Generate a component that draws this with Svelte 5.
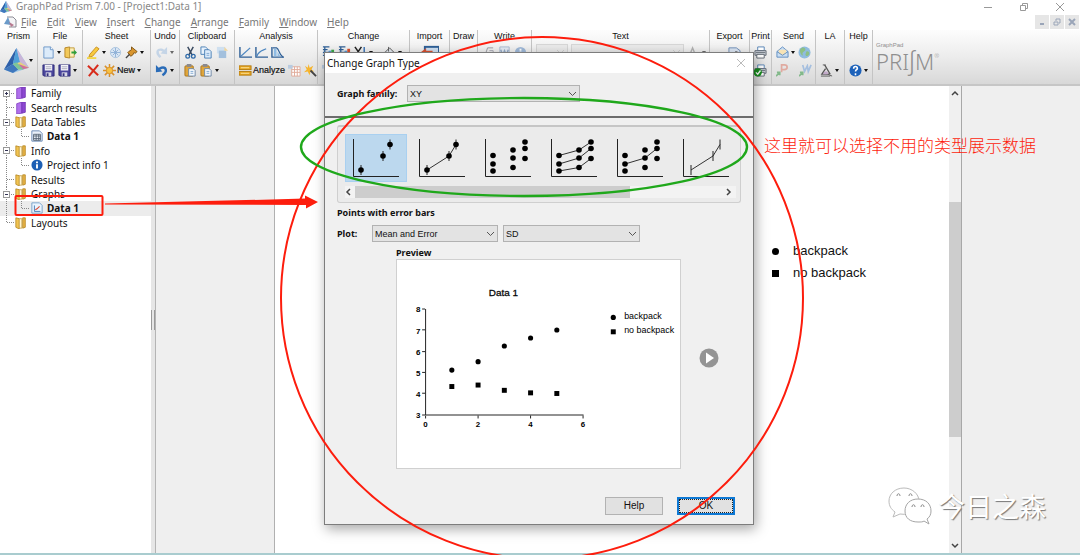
<script lang="ts">
  interface Tool {
    icon?: string;
    label: string;
    text?: string;
    menu?: boolean;
    faded?: boolean;
  }

  interface Group {
    name: string;
    width: number;
    rows: (Tool | null)[][];
  }

  interface TreeRow {
    label: string;
    icon: string;
    toggle?: '+' | '-';
    child?: boolean;
    bold?: boolean;
    selected?: boolean;
  }

  const prism = `
    <path d="M7 0L0 12L5 14L14 11Z" fill="#9cc7e6"/>
    <path d="M7 0L0 12L5 9Z" fill="#2f5fa8"/>
    <path d="M7 0L5 9L9 8Z" fill="#4f9fd8"/>
    <path d="M7 0L9 8L14 11Z" fill="#c9b5d8"/>
    <path d="M5 9L9 8L14 11L8 12Z" fill="#e8d27a"/>
    <path d="M8 9L14 11L10 12Z" fill="#d0709c"/>
    <path d="M0 12L5 9L8 12L5 14Z" fill="#3f77bd"/>
    <path d="M5 9L8 12L11 12L7 8Z" fill="#7cc59a"/>`;

  const copySheets = `
    <path d="M1 1H6L8 3V9H1Z" fill="#e8f2fc" stroke="#4a7fb5"/>
    <path d="M5 4H10L12 6V13H5Z" fill="#dcebfa" stroke="#4a7fb5"/>
    <path d="M7 8H10M7 10H10" stroke="#7ea8d0"/>`;

  const clipboard = `
    <rect x="1" y="2" width="9" height="11" rx="1" fill="#e0a63c" stroke="#a8741c"/>
    <rect x="3" y="0" width="5" height="3" fill="#8a8a90"/>
    <path d="M5 5H10L12 7V13H5Z" fill="#f4f8fc" stroke="#6d87a5"/>
    <path d="M7 8H10M7 10H10" stroke="#7ea8d0"/>`;

  const floppy = `
    <path d="M1 1H13V13H2L1 12Z" fill="#4a459c" stroke="#2f2b78"/>
    <rect x="3" y="1" width="8" height="6" fill="#f3f3f8"/>
    <path d="M4 3H10M4 5H10" stroke="#aab"/>
    <rect x="4" y="9" width="6" height="4" fill="#d8d8e6"/>
    <rect x="5" y="10" width="2" height="3" fill="#33307c"/>`;

  const barsChange = `
    <path d="M1 1H8M1 4H6M1 7H8M1 10H6M3 1V13" stroke="#2e5f96" stroke-width="1.4" fill="none"/>`;

  const printer = `
    <path d="M4 1H11V5H4Z" fill="#fff" stroke="#5583b5"/>
    <path d="M1 5H13V10H1Z" fill="#c9ced6" stroke="#606873"/>
    <path d="M3 9H11V13H3Z" fill="#fff" stroke="#606873"/>
    <path d="M2 7H12" stroke="#707882"/>`;

  const icons: Record<string, string> = {
    prism,
    page: `<path d="M2 1H9L12 4V13H2Z" fill="#dcebfa" stroke="#6b96c8"/><path d="M9 1V4H12" fill="#fff" stroke="#6b96c8"/>`,
    open: `<path d="M1 2L6 1V13L1 12Z" fill="#f3c95a" stroke="#b58424"/><path d="M6 2H11V12H6Z" fill="#fdf0b8" stroke="#c39a3a"/><path d="M8 6H11V4L14 7L11 10V8H8Z" fill="#2e9e3c"/>`,
    floppy,
    pencil: `<path d="M3 9L10 1L13 3L6 11L2 12Z" fill="#f7c93e" stroke="#c88f1e"/><path d="M0 13H10" stroke="#f2d648" stroke-width="2"/>`,
    snow: `<circle cx="7" cy="7" r="5.5" fill="#dbe7f4" stroke="#a9c2de"/><path d="M7 2V12M2 7H12M4 4L10 10M10 4L4 10" stroke="#8fb0d6"/>`,
    pin: `<path d="M7 1L13 6L11 8L10 7L8 10L6 11L3 7L4 6L7 4Z" fill="#d9952e" stroke="#7c5212"/><path d="M5 9L1 13" stroke="#444" stroke-width="1.5"/>`,
    cross: `<path d="M1 2L12 12M12 1L2 13" stroke="#d82c1c" stroke-width="2.2" fill="none"/>`,
    spark: `<path d="M7 0V14M0 7H14M2 2L12 12M12 2L2 12" stroke="#d9912a" stroke-width="1.6"/><circle cx="7" cy="7" r="3.4" fill="#f7c243" stroke="#d9912a"/>`,
    redo: `<path d="M6 12C1 8 2 3 7 4L11 6" fill="none" stroke="#a9c4e2" stroke-width="2.6"/><path d="M13 1V9L6 8Z" fill="#a9c4e2"/>`,
    undo: `<path d="M8 12C14 8 12 3 7 4L3 6" fill="none" stroke="#2a6cb8" stroke-width="2.6"/><path d="M1 1V9L8 8Z" fill="#2a6cb8"/>`,
    cut: `<path d="M4 1L9 10M10 1L5 10" stroke="#3a4a60" stroke-width="1.6"/><circle cx="4" cy="11" r="2" fill="none" stroke="#2f6aa8" stroke-width="1.4"/><circle cx="10" cy="11" r="2" fill="none" stroke="#2f6aa8" stroke-width="1.4"/>`,
    copy: copySheets,
    duplicate: `<rect x="1" y="1" width="9" height="7" fill="#cfe0f0"/><rect x="3" y="5" width="8" height="8" fill="#a3c0dd"/><path d="M9 1L13 5H9Z" fill="#f1d49a"/>`,
    paste: clipboard,
    line: `<path d="M1 1V12H14" fill="none" stroke="#2e5f96" stroke-width="1.5"/><path d="M2 11L12 2" stroke="#4c86c0" stroke-width="1.3"/>`,
    curve: `<path d="M1 1V12H14" fill="none" stroke="#2e5f96" stroke-width="1.5"/><path d="M2 11C4 5 8 5 12 3" fill="none" stroke="#4c86c0" stroke-width="1.3"/>`,
    area: `<path d="M1 1V12H14" fill="none" stroke="#2e5f96" stroke-width="1.5"/><path d="M2 2H6C9 3 8 9 13 12" fill="none" stroke="#2e5f96" stroke-width="1.3"/><path d="M3 3H6V11H3ZM7 6L10 11H7Z" fill="#8fbce4"/>`,
    analyze: `<rect x="0" y="2" width="13" height="4" fill="#e9a820" stroke="#b57b10"/><rect x="0" y="8" width="13" height="4" fill="#e9a820" stroke="#b57b10"/><path d="M2 4H11M2 10H11" stroke="#fbe3a0"/>`,
    grid: `<path d="M4 3H13V13H4ZM4 6H13M4 9H13M7 3V13M10 3V13" fill="#fff" stroke="#e0aa98"/><path d="M0 1H5V5H0Z" fill="#b9cbe0"/>`,
    wand: `<path d="M5 0L6 4L10 2L8 6L11 8L7 8L6 12L4 8L0 9L3 6L1 2L4 4Z" fill="#f6b52e"/><path d="M7 7L13 13" stroke="#444" stroke-width="2"/>`,
    changeA: `${barsChange}<rect x="7" y="5" width="3" height="8" fill="#5a97cf"/><rect x="10" y="4" width="3" height="9" fill="#3aa648"/>`,
    changeB: `${barsChange}<rect x="7" y="5" width="3" height="8" fill="#5a97cf"/><rect x="10" y="3" width="3" height="10" fill="#d8502e"/>`,
    axisX: `<path d="M1 1L8 11M8 1L1 11" stroke="#222" stroke-width="1.6"/><path d="M11 1V13" stroke="#3d76b8" stroke-width="1.6"/>`,
    bucket: `<path d="M2 7L7 2L12 7L7 12Z" fill="#e8edf3" stroke="#555"/><path d="M6 1V6" stroke="#555"/><path d="M11 7L13 12" stroke="#555" stroke-width="2"/>`,
    importGraph: `<rect x="3" y="3" width="11" height="10" fill="#cfe0f2" stroke="#2e5f96" stroke-width="1.5"/><path d="M0 7L4 4V6H9V10H4V12Z" fill="#d8502e"/>`,
    root: `<path d="M1 7L3 11L6 2H12" fill="none" stroke="#9a9aa2"/><path d="M8 5H12V11H8V8H12" fill="none" stroke="#a5a5b0"/>`,
    word: `<path d="M2 1H12V13H2Z" fill="#e4ebf4" stroke="#a9bad0"/><path d="M3 4L5 10L7 5L9 10L11 4" fill="none" stroke="#93a9c6" stroke-width="1.5"/>`,
    infoFaded: `<circle cx="7" cy="7" r="6" fill="#9fb9d9"/><path d="M7 6V11M7 3V5" stroke="#fff" stroke-width="2"/>`,
    fontA: `<path d="M2 12L6 2L10 12M4 8H9" fill="none" stroke="#888" stroke-width="1.5"/>`,
    exportSheet: `<path d="M1 2H9L13 5V13H1Z" fill="#dce6f4" stroke="#6d8db8"/><path d="M8 6L14 8" stroke="#333"/>`,
    printer,
    printOk: `${printer}<circle cx="4" cy="9" r="4.5" fill="#18911e"/><path d="M2 9L4 11L7 7" fill="none" stroke="#fff" stroke-width="1.4"/>`,
    mail: `<path d="M1 6L7 1L13 6V12H1Z" fill="#c9def4" stroke="#5f8cc0"/><path d="M3 4H11V8L7 10L3 8Z" fill="#f7e3b6"/><path d="M1 6L7 10L13 6" fill="none" stroke="#5f8cc0"/>`,
    globe: `<circle cx="7" cy="7" r="6.5" fill="#8fbce0"/><path d="M2 4C5 0 8 2 8 4S4 6 5 9S2 9 2 4ZM9 6C11 5 13 7 12 9S8 12 8 9Z" fill="#8cbf86"/>`,
    sendP: `<path d="M6 9V1H9C13 1 13 6 9 6H6" fill="none" stroke="#e0aaa0" stroke-width="1.8"/><path d="M0 13L4 9M1 9H4V12" fill="none" stroke="#82b98a" stroke-width="1.8"/>`,
    sendW: `<path d="M4 1L6 8L9 2L10 8L13 1" fill="none" stroke="#a5bfdf" stroke-width="1.8"/><path d="M0 13L4 9M1 9H4V12" fill="none" stroke="#82b98a" stroke-width="1.8"/>`,
    flask: `<path d="M5 1L11 11M6 5L2 11H10" fill="none" stroke="#555" stroke-width="1.4"/><path d="M3 1H6M6 10L13 13M1 13H11" fill="none" stroke="#555"/><path d="M5 8H8L9 11H3Z" fill="#c2a9c9"/>`,
    help: `<circle cx="7" cy="7" r="6.5" fill="#1d62ba"/><path d="M5 5C5 2 9 2 9 5C9 6 7 6 7 8M7 10V12" fill="none" stroke="#fff" stroke-width="1.7"/>`,
    folderPurple: `<path d="M2 2L8 0V13L2 14Z" fill="#b070ec" stroke="#8745c4"/><path d="M8 0H12V12L8 13Z" fill="#8d48d2" stroke="#7436b4"/>`,
    folder: `<path d="M1 1L5 2V14L1 12Z" fill="#f2c452" stroke="#b98a28"/><path d="M5 2H8V13H5Z" fill="#fff6d8" stroke="#c8a34a"/><path d="M9 1H12V12L9 13Z" fill="#e8b444" stroke="#b98a28"/>`,
    table: `<path d="M1 1H10L13 4V13H1Z" fill="#eaf1fa" stroke="#5d7fae"/><path d="M3 5H11V12H3ZM3 7H11M3 10H11M6 5V12M9 5V12" fill="none" stroke="#52606f"/>`,
    info: `<circle cx="7" cy="7" r="6.5" fill="#1d5fb4"/><path d="M7 6V11M7 3V5" stroke="#fff" stroke-width="2.2"/>`,
    graph: `<path d="M1 1H10L13 4V13H1Z" fill="#eaf4fd" stroke="#6d9ac4"/><path d="M4 4V11H11" fill="none" stroke="#3f74ad"/><path d="M5 9L7 8L10 5" fill="none" stroke="#d84a36" stroke-width="1.3"/>`
  };

  const menus = ['File', 'Edit', 'View', 'Insert', 'Change', 'Arrange', 'Family', 'Window', 'Help'];

  const groups: Group[] = [
    {
      name: 'File',
      width: 45,
      rows: [
        [{ icon: 'page', label: 'New file', menu: true }, { icon: 'open', label: 'Open' }],
        [{ icon: 'floppy', label: 'Save' }, { icon: 'floppy', label: 'Save as', menu: true }]
      ]
    },
    {
      name: 'Sheet',
      width: 68,
      rows: [
        [
          { icon: 'pencil', label: 'Highlight', menu: true },
          { icon: 'snow', label: 'Freeze' },
          { icon: 'pin', label: 'Pin note', menu: true }
        ],
        [
          { icon: 'cross', label: 'Delete sheet' },
          { icon: 'spark', label: 'New sheet', text: 'New', menu: true }
        ]
      ]
    },
    {
      name: 'Undo',
      width: 29,
      rows: [
        [{ icon: 'redo', label: 'Redo', menu: true, faded: true }],
        [{ icon: 'undo', label: 'Undo', menu: true }]
      ]
    },
    {
      name: 'Clipboard',
      width: 55,
      rows: [
        [
          { icon: 'cut', label: 'Cut' },
          { icon: 'copy', label: 'Copy' },
          { icon: 'duplicate', label: 'Duplicate' }
        ],
        [{ icon: 'paste', label: 'Paste' }, { icon: 'paste', label: 'Paste special', menu: true }]
      ]
    },
    {
      name: 'Analysis',
      width: 83,
      rows: [
        [
          { icon: 'line', label: 'Linear regression' },
          { icon: 'curve', label: 'Nonlinear regression' },
          { icon: 'area', label: 'Interpolate' }
        ],
        [
          { icon: 'analyze', label: 'Analyze data', text: 'Analyze' },
          { icon: 'grid', label: 'Change parameters' },
          { icon: 'wand', label: 'Analysis wizard' }
        ]
      ]
    },
    {
      name: 'Change',
      width: 92,
      rows: [
        [
          { icon: 'changeA', label: 'Graph type' },
          { icon: 'changeB', label: 'Graph order' },
          { icon: 'axisX', label: 'Format axes', menu: true },
          null,
          { icon: 'bucket', label: 'Color scheme', menu: true }
        ],
        [{ icon: 'grid', label: 'Format graph' }]
      ]
    },
    { name: 'Import', width: 40, rows: [[null, { icon: 'importGraph', label: 'Import' }]] },
    { name: 'Draw', width: 28, rows: [] },
    {
      name: 'Write',
      width: 54,
      rows: [
        [
          { icon: 'root', label: 'Equation' },
          { icon: 'word', label: 'Word object' },
          { icon: 'infoFaded', label: 'Info' }
        ]
      ]
    },
    { name: 'Text', width: 178, rows: [] },
    { name: 'Export', width: 40, rows: [[null, null, { icon: 'exportSheet', label: 'Export' }]] },
    {
      name: 'Print',
      width: 22,
      rows: [[{ icon: 'printer', label: 'Print' }], [{ icon: 'printOk', label: 'Print now' }]]
    },
    {
      name: 'Send',
      width: 44,
      rows: [
        [{ icon: 'mail', label: 'Send mail', menu: true }, { icon: 'globe', label: 'Publish' }],
        [{ icon: 'sendP', label: 'Send to PowerPoint' }, null, { icon: 'sendW', label: 'Send to Word' }]
      ]
    },
    { name: 'LA', width: 29, rows: [[], [{ icon: 'flask', label: 'LabArchives', menu: true }]] },
    { name: 'Help', width: 28, rows: [[], [{ icon: 'help', label: 'Help topics', menu: true }]] }
  ];

  const tree: TreeRow[] = [
    { label: 'Family', icon: 'folderPurple', toggle: '+' },
    { label: 'Search results', icon: 'folderPurple' },
    { label: 'Data Tables', icon: 'folder', toggle: '-' },
    { label: 'Data 1', icon: 'table', child: true, bold: true },
    { label: 'Info', icon: 'folder', toggle: '-' },
    { label: 'Project info 1', icon: 'info', child: true },
    { label: 'Results', icon: 'folder' },
    { label: 'Graphs', icon: 'folder', toggle: '-' },
    { label: 'Data 1', icon: 'graph', child: true, bold: true, selected: true },
    { label: 'Layouts', icon: 'folder' }
  ];

  // thumbnails of the graph types, drawn in a 62x47 box
  const three = [[16, 21.5], [16, 30], [16, 37], [36, 16], [36, 24], [36, 33.5], [48, 8], [48, 14.5], [48, 24.5]];
  const means = [[16, 36], [38, 22], [45, 10.5]];

  const types = [
    { name: 'Points with error bars', dots: means, bars: means, lines: [] as string[] },
    { name: 'Points and connecting line', dots: means, bars: means, lines: ['16,36 38,22 45,10.5'] },
    { name: 'Replicates', dots: three, bars: [], lines: [] },
    {
      name: 'Replicates, each connected',
      dots: three,
      bars: [],
      lines: ['16,21.5 36,16 48,8', '16,30 36,24 48,14.5', '16,37 36,33.5 48,24.5']
    },
    { name: 'Replicates, means connected', dots: three, bars: [], lines: ['16,30 36,24 48,14.5'] },
    { name: 'Connecting line with error bars', dots: [], bars: means, lines: ['16,36 38,22 45,10.5'] }
  ];

  const backpack = [5.13, 5.53, 6.27, 6.65, 7.03];
  const noBackpack = [4.35, 4.42, 4.17, 4.05, 4.02];

  const px = (x: number) => 28.5 + x * 26.5;
  const py = (y: number) => 156.5 - (y - 3) * 21.3;

  let selectedType = $state(0);
  let family = $state('XY');
  let plot = $state('Mean and Error');
  let error = $state('SD');
</script>

{#snippet icon(name: string, size = 13)}
  <svg class="icon" width={size} height={size} viewBox="0 0 14 14" aria-hidden="true">
    {@html icons[name]}
  </svg>
{/snippet}

{#snippet chevron()}
  <svg class="chevron" width="9" height="6" viewBox="0 0 9 6" aria-hidden="true">
    <path d="M1 1L4.5 4.5L8 1" fill="none" stroke="#555" />
  </svg>
{/snippet}

<div class="app">
  <header class="titlebar">
    {@render icon('prism', 12)}
    <span class="titlebar-text">GraphPad Prism 7.00 - [Project1:Data 1]</span>
    <div class="window-buttons">
      <button aria-label="Minimize">
        <svg width="10" height="10" viewBox="0 0 10 10"><path d="M1 5.5H9" /></svg>
      </button>
      <button aria-label="Restore">
        <svg width="10" height="10" viewBox="0 0 10 10"><path d="M1.5 3.5H6.5V8.5H1.5ZM3.5 3V1.5H8.5V6.5H7" /></svg>
      </button>
      <button aria-label="Close">
        <svg width="10" height="10" viewBox="0 0 10 10"><path d="M1 1L9 9M9 1L1 9" /></svg>
      </button>
    </div>
  </header>

  <nav class="menubar">
    <svg class="doc-icon" width="13" height="12" viewBox="0 0 13 12" aria-hidden="true">
      <path d="M3 1H9L12 4V11H5" fill="#f4f4f6" stroke="#8b8b95" />
      <path d="M4 1L0 8L7 9Z" fill="#6b9bc9" />
      <path d="M5 6L10 9L7 11Z" fill="#b7798f" />
    </svg>
    {#each menus as menu}
      <button class="menu"><u>{menu[0]}</u>{menu.slice(1)}</button>
    {/each}
    <div class="mdi-buttons">
      <button aria-label="Minimize document">
        <svg width="8" height="8" viewBox="0 0 8 8"><path d="M2 6H6" stroke-width="2" /></svg>
      </button>
      <button aria-label="Restore document">
        <svg width="8" height="8" viewBox="0 0 8 8"><path d="M1 4H5V7H1ZM3 3V1H7V5H6" /></svg>
      </button>
      <button aria-label="Close document">
        <svg width="8" height="8" viewBox="0 0 8 8"><path d="M1 1L7 7M7 1L1 7" stroke-width="2" /></svg>
      </button>
    </div>
  </nav>

  <div class="toolbar">
    <section class="group prism">
      <span class="group-name">Prism</span>
      <button class="tool" aria-label="Prism menu">
        {@render icon('prism', 25)}
        <span class="arrow"></span>
      </button>
    </section>
    {#each groups as group}
      <section class="group" style="width: {group.width}px">
        <span class="group-name">{group.name}</span>
        {#if group.name === 'Text'}
          <div class="tool-row">
            <div class="select font-size">
              <select aria-label="Font size" disabled><option></option></select>
              {@render chevron()}
            </div>
            <div class="select font-name">
              <select aria-label="Font" disabled><option></option></select>
              {@render chevron()}
            </div>
            <button class="tool faded" aria-label="Font style">
              {@render icon('fontA')}
              <span class="arrow"></span>
            </button>
          </div>
        {/if}
        {#each group.rows as row}
          <div class="tool-row">
            {#each row as tool}
              {#if tool}
                <button class="tool" class:faded={tool.faded} aria-label={tool.label}>
                  {@render icon(tool.icon ?? '', group.name === 'Import' ? 18 : 13)}
                  {#if tool.text}<span class="tool-text">{tool.text}</span>{/if}
                  {#if tool.menu}<span class="arrow"></span>{/if}
                </button>
              {:else}
                <span class="spacer"></span>
              {/if}
            {/each}
          </div>
        {/each}
      </section>
    {/each}
    <div class="brand" aria-label="GraphPad PRISM">
      <span class="brand-small">GraphPad</span>
      <span class="brand-name">PRI<span class="brand-s">ʃ</span>M<sup>®</sup></span>
    </div>
  </div>

  <div class="workspace">
    <aside class="sidebar">
      <ul class="tree">
        {#each tree as row, i}
          <li class="tree-row" class:bold={row.bold} class:selected={row.selected}>
            <svg class="branch" width={row.child ? 31 : 15} height="15" aria-hidden="true">
              <path
                class="dots"
                d="M6.5 {i === 0 ? 7 : 0}V{i === tree.length - 1 ? 7 : 15}{row.child ? 'M21.5 0V7.5H30' : 'M7 7.5H15'}"
              />
              {#if row.toggle}
                <rect x="3.5" y="4.5" width="6" height="6" fill="#fff" stroke="#999" />
                <path d="M5 7.5H8{row.toggle === '+' ? 'M6.5 6V9' : ''}" stroke="#335" />
              {/if}
            </svg>
            {@render icon(row.icon, 12)}
            <span>{row.label}</span>
          </li>
        {/each}
      </ul>
    </aside>
    <div class="splitter"><span class="grip"></span></div>
    <main class="canvas">
      <div class="sheet">
        <ul class="legend">
          <li><span class="mark round"></span>backpack</li>
          <li><span class="mark"></span>no backpack</li>
        </ul>
      </div>
      <div class="vscroll">
        <svg width="8" height="6" viewBox="0 0 8 6"><path d="M1 5L4 2L7 5" /></svg>
        <span class="vthumb"></span>
        <svg width="8" height="6" viewBox="0 0 8 6"><path d="M1 1L4 4L7 1" /></svg>
      </div>
    </main>
  </div>

  <div class="dialog" role="dialog" aria-labelledby="dialog-title">
    <div class="dialog-title">
      <span id="dialog-title">Change Graph Type</span>
      <button aria-label="Close dialog">
        <svg width="10" height="10" viewBox="0 0 10 10"><path d="M1 1L9 9M9 1L1 9" stroke="#bbb" /></svg>
      </button>
    </div>

    <div class="dialog-body">
      <div class="field family">
        <label for="family">Graph family:</label>
        <div class="select">
          <select id="family" bind:value={family}>
            <option>XY</option>
            <option>Column</option>
            <option>Grouped</option>
          </select>
          {@render chevron()}
        </div>
      </div>

      <hr />

      <div class="gallery">
        <div class="types">
          {#each types as type, i}
            <button
              class="type"
              class:active={selectedType === i}
              aria-label={type.name}
              onclick={() => (selectedType = i)}
            >
              <svg width="60" height="47" viewBox="0 0 60 47" aria-hidden="true">
                <path d="M8.5 5V42.5H54" fill="none" stroke="#222" />
                {#each type.lines as points}
                  <polyline {points} fill="none" stroke="#333" />
                {/each}
                {#each type.bars as [x, y]}
                  <path d="M{x} {y - 5}V{y + 5}" stroke="#222" />
                {/each}
                {#each type.dots as [x, y]}
                  <circle cx={x} cy={y} r="2.8" />
                {/each}
              </svg>
            </button>
          {/each}
        </div>
        <div class="hscroll">
          <svg width="6" height="8" viewBox="0 0 6 8"><path d="M5 1L2 4L5 7" /></svg>
          <span class="htrack"><span class="hthumb"></span></span>
          <svg width="6" height="8" viewBox="0 0 6 8"><path d="M1 1L4 4L1 7" /></svg>
        </div>
      </div>

      <h2>Points with error bars</h2>

      <div class="field plot">
        <label for="plot">Plot:</label>
        <div class="select">
          <select id="plot" bind:value={plot}>
            <option>Mean and Error</option>
            <option>Median and Range</option>
          </select>
          {@render chevron()}
        </div>
        <div class="select wide">
          <select aria-label="Error bars" bind:value={error}>
            <option>SD</option>
            <option>SEM</option>
          </select>
          {@render chevron()}
        </div>
      </div>

      <div class="preview-area">
        <figure>
          <figcaption>Preview</figcaption>
          <svg class="preview" width="285" height="210" viewBox="0 0 285 210">
            <text class="chart-title" x="107" y="36">Data 1</text>
            <path d="M28.5 49.5V156.5H188" fill="none" stroke="#222" />
            {#each [3, 4, 5, 6, 7, 8] as y}
              <path d="M25 {Math.round(py(y)) - 0.5}H28" stroke="#222" />
              <text class="tick" x="21" y={py(y) + 3}>{y}</text>
            {/each}
            {#each [0, 2, 4, 6] as x}
              <path d="M{Math.round(px(x)) - 0.5} 157V160" stroke="#222" />
              <text class="tick" x={px(x)} y="169">{x}</text>
            {/each}
            {#each backpack as y, i}
              <circle cx={px(i + 1)} cy={py(y)} r="2.6" />
            {/each}
            {#each noBackpack as y, i}
              <rect x={px(i + 1) - 2.5} y={py(y) - 2.5} width="5" height="5" />
            {/each}
            <circle cx="218" cy="58" r="2.6" />
            <text class="key" x="229" y="60">backpack</text>
            <rect x="215.5" y="70" width="5" height="5" />
            <text class="key" x="229" y="74">no backpack</text>
          </svg>
        </figure>
        <button class="next" aria-label="Next preview">
          <svg width="20" height="20" viewBox="0 0 20 20">
            <circle cx="10" cy="10" r="9.5" fill="#949494" />
            <path d="M7 4.5L15 10L7 15.5Z" fill="#fff" />
          </svg>
        </button>
      </div>

      <div class="actions">
        <button class="action">Help</button>
        <button class="action default">OK</button>
      </div>
    </div>
  </div>

  <div class="statusline"></div>

  <svg class="markup" width="1080" height="555" viewBox="0 0 1080 555" aria-hidden="true">
    <ellipse cx="542" cy="298" rx="261" ry="261" stroke="#fd1d0d" stroke-width="2" />
    <ellipse cx="524" cy="147" rx="223" ry="49" stroke="#1fa81b" stroke-width="2.4" />
    <rect x="15.5" y="196" width="87" height="19" rx="1" stroke="#fd1d0d" stroke-width="2" />
    <path d="M105 203.6L305 198.6V195.5L318 202L306 208.5V205L105 204.4Z" fill="#fd1d0d" />
  </svg>
  <p class="note">这里就可以选择不用的类型展示数据</p>
  <div class="watermark">
    <svg width="44" height="38" viewBox="0 0 44 38" aria-hidden="true">
      <path
        d="M16 1C7 1 1 7 1 14C1 19 3 22 7 25L5 30L12 27C25 29 31 22 31 14C31 7 24 1 16 1Z"
        fill="#fff"
        stroke="#bbb"
      />
      <path
        d="M30 12C22 12 17 17 17 24S22 35 30 35C33 35 35 35 36 34L41 37L39 32C42 30 43 27 43 24C43 17 38 12 30 12Z"
        fill="#fff"
        stroke="#a5a5a5"
      />
      <path d="M9 9C9 6 12 6 12 9M21 9C21 6 24 6 24 9M24 20C24 17 27 17 27 20M33 20C33 17 36 17 36 20" fill="none" stroke="#888" />
    </svg>
    <span>今日之森</span>
  </div>
</div>

<style>
  :global(body) {
    background: #fff;
  }

  .app {
    position: relative;
    display: flex;
    flex-direction: column;
    min-height: 100vh;
    overflow: hidden;
    font-family: 'Noto Sans', 'Noto Sans CJK SC', sans-serif;
    font-size: 10px;
    color: #111;
  }

  button {
    margin: 0;
    padding: 0;
    border: 0;
    background: none;
    font: inherit;
    color: inherit;
  }

  svg {
    display: block;
    flex: none;
  }

  .titlebar {
    display: flex;
    align-items: center;
    gap: 4px;
    height: 13px;
    color: #888;
    line-height: 13px;
  }

  .window-buttons {
    display: flex;
    gap: 26px;
    margin-left: auto;
    padding-right: 15px;
  }

  .window-buttons path {
    fill: none;
    stroke: #999;
  }

  .menubar {
    display: flex;
    align-items: center;
    gap: 10px;
    height: 17px;
    padding-left: 4px;
    color: #777;
    line-height: 14px;
  }

  .doc-icon {
    margin-right: -6px;
  }

  .mdi-buttons {
    display: flex;
    gap: 1px;
    margin-left: auto;
    padding-right: 1px;
  }

  .mdi-buttons button {
    display: grid;
    place-items: center;
    width: 14px;
    height: 14px;
    background: #e6e6e6;
  }

  .mdi-buttons path {
    fill: none;
    stroke: #9aa5b8;
  }

  .toolbar {
    display: flex;
    height: 56px;
    box-sizing: border-box;
    border-bottom: 2px solid #c6c6c6;
    background: linear-gradient(#fdfdfd, #ececec 50%, #d8d8d8);
    font-family: 'Liberation Sans', Arial, sans-serif;
  }

  .group {
    display: flex;
    flex: none;
    flex-direction: column;
    box-sizing: border-box;
    border-right: 1px solid #c4c4c4;
    overflow: hidden;
  }

  .group.prism {
    width: 38px;
    align-items: center;
  }

  .group-name {
    font-size: 9px;
    line-height: 13px;
    text-align: center;
  }

  .prism .tool {
    gap: 0;
    margin-top: 5px;
  }

  .prism .arrow {
    margin-left: 0;
  }

  .tool-row {
    display: flex;
    align-items: center;
    gap: 3px;
    height: 18px;
    padding-left: 4px;
  }

  .tool {
    display: flex;
    align-items: center;
    gap: 1px;
  }

  .faded {
    opacity: 0.6;
  }

  .tool-text {
    font-size: 9px;
    line-height: 12px;
    -webkit-text-stroke: 0.2px #111;
  }

  .arrow {
    margin-left: 1px;
    border: 2px solid transparent;
    border-top: 3px solid #111;
    border-bottom: 0;
  }

  .spacer {
    width: 4px;
  }

  .brand {
    display: flex;
    flex-direction: column;
    padding: 12px 0 0 3px;
    color: #8f8f8f;
  }

  .brand-small {
    font-size: 6px;
    line-height: 6px;
  }

  .brand-name {
    font-family: 'Liberation Sans Narrow', 'Noto Sans', sans-serif;
    font-size: 22px;
    font-weight: 300;
    line-height: 24px;
  }

  .brand-s {
    font-size: 26px;
  }

  .brand-name sup {
    font-size: 6px;
    line-height: 6px;
    vertical-align: 12px;
  }

  .workspace {
    display: flex;
    flex: 1;
  }

  .sidebar {
    width: 151px;
    flex: none;
    background: #fff;
  }

  .tree {
    display: grid;
    grid-template-rows: repeat(10, 1fr);
    height: 144px;
    margin: 0;
    padding: 0;
    list-style: none;
  }

  .tree-row {
    display: flex;
    align-items: center;
    overflow: hidden;
    line-height: 14px;
  }

  .tree-row span {
    padding-left: 4px;
  }

  .tree-row.bold {
    font-weight: 700;
  }

  .tree-row.selected {
    background: #ececec;
  }

  .dots {
    fill: none;
    stroke: #888;
    stroke-dasharray: 1 1;
  }

  .splitter {
    display: flex;
    align-items: center;
    width: 5px;
    box-sizing: border-box;
    border-right: 1px solid #b4b4b4;
    background: #e6e6e6;
  }

  .grip {
    width: 2px;
    height: 20px;
    border: solid #999;
    border-width: 0 1px;
  }

  .canvas {
    display: flex;
    flex: 1;
    padding: 0 118px;
    background: #efefef;
  }

  .sheet {
    flex: 1;
    border-left: 1px solid #b0b0b0;
    background: #fff;
  }

  .legend {
    display: flex;
    flex-direction: column;
    align-items: flex-start;
    gap: 6px;
    width: max-content;
    margin: 157px 83px 0 auto;
    padding: 0;
    list-style: none;
    font-family: 'Liberation Sans', Arial, sans-serif;
    font-size: 13px;
    line-height: 16px;
  }

  .legend li {
    display: flex;
    align-items: center;
    gap: 14px;
  }

  .mark {
    width: 7px;
    height: 7px;
    background: #000;
  }

  .round {
    border-radius: 50%;
  }

  .vscroll {
    display: flex;
    flex-direction: column;
    align-items: center;
    justify-content: space-between;
    width: 12px;
    padding: 4px 0;
    border-right: 1px solid #a8a8a8;
    background: #f0f0f0;
  }

  .vscroll path,
  .hscroll path {
    fill: none;
    stroke: #444;
    stroke-width: 1.5;
  }

  .vthumb {
    width: 12px;
    height: 235px;
    background: #cdcdcd;
  }

  .dialog {
    position: absolute;
    top: 52px;
    left: 324px;
    width: 430px;
    box-sizing: border-box;
    border: 1px solid #7d7d7d;
    background: #f0f0f0;
    box-shadow: 2px 4px 12px rgb(0 0 0 / 0.35);
  }

  .dialog-title {
    display: flex;
    align-items: center;
    justify-content: space-between;
    height: 20px;
    padding: 0 7px 0 2px;
    background: #fff;
    line-height: 14px;
  }

  .dialog-body {
    padding: 12px 12px 9px;
  }

  .field {
    display: flex;
    align-items: center;
  }

  .field label,
  h2,
  figcaption {
    font-size: 9px;
    font-weight: 700;
    line-height: 12px;
  }

  .family label {
    width: 70px;
  }

  .family .select {
    width: 173px;
  }

  .plot label {
    width: 35px;
  }

  .plot .select {
    width: 126px;
  }

  .plot .select.wide {
    width: 137px;
    margin-left: 5px;
  }

  .select {
    display: grid;
    align-items: center;
  }

  .select select,
  .select .chevron {
    grid-area: 1 / 1;
  }

  .select .chevron {
    justify-self: end;
    margin-right: 3px;
    pointer-events: none;
  }

  select {
    width: 100%;
    height: 17px;
    box-sizing: border-box;
    margin: 0;
    padding: 0 2px;
    border: 1px solid #b2b2b2;
    border-radius: 0;
    background: #e3e3e3;
    font-family: 'Liberation Sans', Arial, sans-serif;
    font-size: 9px;
    line-height: 14px;
    color: #111;
    appearance: none;
  }

  .font-size,
  .font-name {
    opacity: 0.6;
  }

  .font-size {
    width: 32px;
  }

  .font-name {
    width: 113px;
  }

  hr {
    height: 2px;
    margin: 14px -12px 7px;
    border: 0;
    background: #6c6c6c;
  }

  .gallery {
    height: 78px;
    box-sizing: border-box;
    padding: 7px 4px 3px 7px;
    border: 1px solid #cfcfcf;
    border-top: 2px solid #c6c6c6;
    border-radius: 3px;
    background: #ebebeb;
  }

  .types {
    display: flex;
    gap: 4px;
    overflow: hidden;
  }

  .type {
    flex: none;
    width: 62px;
    height: 48px;
    border: 1px solid transparent;
  }

  .type svg {
    margin-top: -2px;
    margin-left: -1px;
  }

  .type.active {
    border-color: #a9d0f0;
    background: #bcd8ee;
  }

  .hscroll {
    display: flex;
    align-items: center;
    gap: 4px;
    height: 12px;
    margin-top: 4px;
    padding: 0 4px 0 0;
    background: #f3f3f3;
  }

  .htrack {
    flex: 1;
  }

  .hthumb {
    display: block;
    width: 75%;
    height: 12px;
    background: #cdcdcd;
  }

  h2 {
    margin: 4px 0 6px;
  }

  .preview-area {
    display: flex;
    align-items: center;
    gap: 18px;
    padding: 5px 0 0 59px;
  }

  figure {
    margin: 0;
  }

  .preview {
    border: 1px solid #d0d0d0;
    box-sizing: border-box;
    background: #fff;
  }

  .preview text {
    font-family: 'Liberation Sans', Arial, sans-serif;
  }

  .chart-title {
    font-size: 10px;
    text-anchor: middle;
    stroke: #111;
    stroke-width: 0.3;
  }

  .tick {
    font-size: 8px;
    font-weight: 700;
    text-anchor: middle;
  }

  .key {
    font-size: 9px;
  }

  .actions {
    display: flex;
    justify-content: flex-end;
    gap: 14px;
    margin-top: 28px;
    padding-right: 6px;
  }

  .action {
    width: 58px;
    height: 18px;
    border: 1px solid #b2b2b2;
    background: #e1e1e1;
    font-family: 'Liberation Sans', Arial, sans-serif;
    line-height: 14px;
  }

  .action.default {
    border: 2px solid #0d78d4;
    outline: 1px dotted #222;
    outline-offset: -3px;
  }

  .statusline {
    height: 2px;
    background: #a9cccf;
  }

  .markup {
    position: absolute;
    top: 0;
    left: 0;
    fill: none;
    pointer-events: none;
  }

  .note {
    position: absolute;
    top: 133px;
    left: 764px;
    margin: 0;
    font-family: 'Noto Sans CJK SC', sans-serif;
    font-size: 17px;
    font-weight: 300;
    line-height: 24px;
    color: #fd1d0d;
    white-space: nowrap;
  }

  .watermark {
    position: absolute;
    top: 487px;
    left: 888px;
    display: flex;
    align-items: center;
    gap: 6px;
    font-family: 'Noto Sans CJK SC', sans-serif;
    font-size: 27px;
    line-height: 38px;
    color: #fff;
    text-shadow: 1px 1px 1px #777;
    white-space: nowrap;
  }
</style>
